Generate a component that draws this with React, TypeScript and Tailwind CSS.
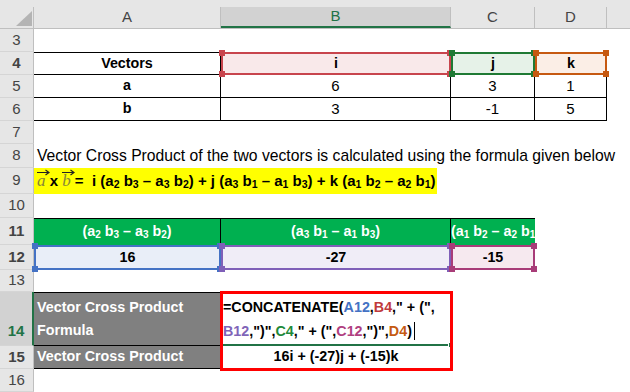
import React from "react";

const sans = "font-['Liberation_Sans',Arial,sans-serif]";

function RowHead({ n, active = false, bottom = false }: { n: number; active?: boolean; bottom?: boolean }) {
  return (
    <div
      className={`flex w-[34px] shrink-0 justify-center border-b border-b-[#d5d5d5] text-[15px] ${
        bottom ? "items-end pb-[3px]" : "items-center"
      } ${
        active
          ? "border-r-2 border-r-[#217346] bg-[#d2d2d2] text-[#217346]"
          : "border-r border-r-[#bfbfbf] bg-[#e6e6e6] text-[#444]"
      }`}
    >
      {n}
    </div>
  );
}

// coloured frame Excel draws round a cell a formula refers to
function Mark({ line, dot }: { line: string; dot: string }) {
  return (
    <div className={`pointer-events-none absolute inset-0 border-2 ${line}`}>
      <span className={`absolute -left-[4px] -top-[4px] h-[6px] w-[6px] ${dot}`} />
      <span className={`absolute -right-[4px] -top-[4px] h-[6px] w-[6px] ${dot}`} />
      <span className={`absolute -bottom-[4px] -left-[4px] h-[6px] w-[6px] ${dot}`} />
      <span className={`absolute -bottom-[4px] -right-[4px] h-[6px] w-[6px] ${dot}`} />
    </div>
  );
}

function Vec({ l }: { l: string }) {
  return (
    <span className="relative inline-block font-['Liberation_Serif',serif] text-[17px] font-normal italic text-[#86863a]">
      {l}
      <svg className="absolute left-0 top-[1px]" width="13" height="7" viewBox="0 0 13 7">
        <path d="M0 3.5H11.5M8.5 1L12 3.5L8.5 6" fill="none" stroke="#222" strokeWidth="1.2" />
      </svg>
    </span>
  );
}

const S = ({ c }: { c: string }) => <sub className="text-[70%]">{c}</sub>;

export default function App() {
  return (
    <div className={`h-[392px] w-[630px] overflow-hidden bg-white text-black ${sans}`}>
      {/* column headers */}
      <div className="flex h-[29px] border-b border-[#bfbfbf] bg-[#e6e6e6] text-[15px] text-[#444]">
        <div className="mt-[7px] flex w-[34px] shrink-0 items-end justify-end border-r border-[#bfbfbf] pb-[2px] pr-[1px]">
          <svg width="16" height="15" viewBox="0 0 16 15">
            <polygon points="16,0 16,15 0,15" fill="#b4b4b4" />
          </svg>
        </div>
        <div className="mt-[7px] flex w-[187px] shrink-0 items-center justify-center border-r border-[#bfbfbf]">A</div>
        <div className="mt-[7px] flex w-[230px] shrink-0 items-center justify-center border-b-2 border-r border-b-[#217346] border-r-[#bfbfbf] bg-[#d2d2d2] text-[#217346]">
          B
        </div>
        <div className="mt-[7px] flex w-[84px] shrink-0 items-center justify-center border-r border-[#bfbfbf]">C</div>
        <div className="mt-[7px] flex w-[72px] shrink-0 items-center justify-center border-r border-[#bfbfbf]">D</div>
        <div className="mt-[7px] flex-1" />
      </div>

      <div className="flex h-[23px]">
        <RowHead n={3} />
      </div>

      <div className="flex h-[23px] text-[14.3px] font-bold">
        <RowHead n={4} />
        <div className="flex w-[187px] shrink-0 items-center justify-center border-y border-r border-black">Vectors</div>
        <div className="relative flex w-[230px] shrink-0 items-center justify-center bg-[#f9e9ea]">
          i
          <Mark line="border-[#c8454d]" dot="bg-[#c8454d]" />
        </div>
        <div className="relative flex w-[84px] shrink-0 items-center justify-center bg-[#e6f2e8]">
          j
          <Mark line="border-[#1f7a34]" dot="bg-[#1f7a34]" />
        </div>
        <div className="relative flex w-[72px] shrink-0 items-center justify-center bg-[#fbeee6]">
          k
          <Mark line="border-[#c65911]" dot="bg-[#c65911]" />
        </div>
      </div>

      {[
        ["a", "6", "3", "1", 5],
        ["b", "3", "-1", "5", 6],
      ].map(([v, i, j, k, n]) => (
        <div key={n} className="flex h-[23px] text-[15px]">
          <RowHead n={n as number} />
          <div className="flex w-[187px] shrink-0 items-center justify-center border-b border-r border-black text-[14.3px] font-bold">
            {v}
          </div>
          <div className="flex w-[230px] shrink-0 items-center justify-center border-b border-r border-black">{i}</div>
          <div className="flex w-[84px] shrink-0 items-center justify-center border-b border-r border-black">{j}</div>
          <div className="flex w-[72px] shrink-0 items-center justify-center border-b border-r border-black">{k}</div>
        </div>
      ))}

      <div className="flex h-[23px]">
        <RowHead n={7} />
      </div>

      <div className="flex h-[24px]">
        <RowHead n={8} />
        <div className="flex items-center whitespace-nowrap pl-[3px] text-[15.7px]">
          Vector Cross Product of the two vectors is calculated using the formula given below
        </div>
      </div>

      <div className="flex h-[26px]">
        <RowHead n={9} />
        <div className="flex w-[403px] shrink-0 items-center whitespace-pre bg-[#ffff00] pl-[3px] text-[15px] font-bold">
          <Vec l="a" />
          {" x "}
          <Vec l="b" />
          {" =  i (a"}
          <S c="2" />
          {" b"}
          <S c="3" />
          {" – a"}
          <S c="3" />
          {" b"}
          <S c="2" />
          {") + j (a"}
          <S c="3" />
          {" b"}
          <S c="1" />
          {" – a"}
          <S c="1" />
          {" b"}
          <S c="3" />
          {") + k (a"}
          <S c="1" />
          {" b"}
          <S c="2" />
          {" – a"}
          <S c="2" />
          {" b"}
          <S c="1" />
          {")"}
        </div>
      </div>

      <div className="flex h-[24px]">
        <RowHead n={10} />
      </div>

      <div className="flex h-[27px] text-[14.3px] font-bold text-white">
        <RowHead n={11} />
        <div className="flex w-[187px] shrink-0 items-center justify-center whitespace-pre border-r border-t border-black bg-[#00b050]">
          (a<S c="2" /> b<S c="3" /> – a<S c="3" /> b<S c="2" />)
        </div>
        <div className="flex w-[230px] shrink-0 items-center justify-center whitespace-pre border-r border-t border-black bg-[#00b050]">
          (a<S c="3" /> b<S c="1" /> – a<S c="1" /> b<S c="3" />)
        </div>
        <div className="flex w-[84px] shrink-0 items-center justify-start overflow-hidden whitespace-pre border-t border-black bg-[#00b050]">
          (a<S c="1" /> b<S c="2" /> – a<S c="2" /> b<S c="1" />)
        </div>
      </div>

      <div className="flex h-[25px] text-[14.3px] font-bold">
        <RowHead n={12} />
        <div className="relative flex w-[187px] shrink-0 items-center justify-center bg-[#e9eef8]">
          16
          <Mark line="border-[#4472c4]" dot="bg-[#4472c4]" />
        </div>
        <div className="relative flex w-[230px] shrink-0 items-center justify-center bg-[#f0edf7]">
          -27
          <Mark line="border-[#7f5fb8]" dot="bg-[#7f5fb8]" />
        </div>
        <div className="relative flex w-[84px] shrink-0 items-center justify-center bg-[#f6e9ef]">
          -15
          <Mark line="border-[#a83c78]" dot="bg-[#a83c78]" />
        </div>
      </div>

      <div className="flex h-[22px]">
        <RowHead n={13} />
      </div>

      <div className="relative text-[14.3px] font-bold">
        <div className="flex h-[54px]">
          <RowHead n={14} active bottom />
          <div className="flex w-[187px] shrink-0 flex-col justify-center border-y border-r border-black bg-[#808080] pl-[3px] leading-[23px] text-white">
            <span>Vector Cross Product</span>
            <span>Formula</span>
          </div>
          <div className="relative w-[230px] shrink-0 whitespace-pre border-b-2 border-t border-b-[#217346] border-t-black pl-[2px] pt-[2px] leading-[24px]">
            <div>
              =CONCATENATE(<span className="text-[#4472c4]">A12</span>,<span className="text-[#c0393b]">B4</span>," + (",
            </div>
            <div className="flex items-center">
              <span className="text-[#8064b8]">B12</span>,")",<span className="text-[#1e8a3a]">C4</span>," + (",
              <span className="text-[#b0407f]">C12</span>,")",<span className="text-[#c55a11]">D4</span>)
              <span className="ml-[2px] inline-block h-[18px] w-px bg-black" />
            </div>
            <span className="absolute -bottom-[4px] -right-[3px] h-[6px] w-[6px] border border-white bg-[#217346]" />
          </div>
        </div>
        <div className="flex h-[23px]">
          <RowHead n={15} />
          <div className="flex w-[187px] shrink-0 items-center whitespace-nowrap border-b border-r border-black bg-[#808080] pl-[3px] text-white">
            Vector Cross Product
          </div>
          <div className="flex w-[230px] shrink-0 items-center justify-center border-b border-black">
            16i + (-27)j + (-15)k
          </div>
        </div>
        <div className="pointer-events-none absolute left-[220px] top-[-1px] h-[80px] w-[233px] border-[3px] border-[#ff0000]" />
      </div>

      <div className="flex h-[23px]">
        <RowHead n={16} />
      </div>
    </div>
  );
}
